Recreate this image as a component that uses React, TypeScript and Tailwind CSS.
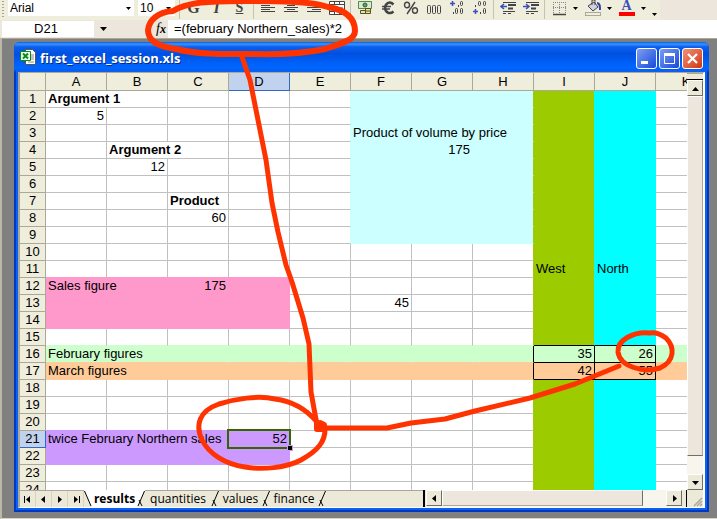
import { Fragment, type ReactNode } from "react";

const COLUMNS = ["A", "B", "C", "D", "E", "F", "G", "H", "I", "J", "K"];
const ROWS = Array.from({ length: 24 }, (_, i) => i + 1);

type Cell = { text: string; bold?: boolean; right?: boolean; span?: number };

const CELLS: Record<string, Cell> = {
  A1: { text: "Argument 1", bold: true, span: 2 },
  A2: { text: "5", right: true },
  B4: { text: "Argument 2", bold: true, span: 2 },
  B5: { text: "12", right: true },
  C7: { text: "Product", bold: true },
  C8: { text: "60", right: true },
  F3: { text: "Product of volume by price", span: 3 },
  G4: { text: "175", right: true },
  I11: { text: "West" },
  J11: { text: "North" },
  A12: { text: "Sales figure", span: 2 },
  C12: { text: "175", right: true },
  F13: { text: "45", right: true },
  A16: { text: "February figures", span: 3 },
  I16: { text: "35", right: true },
  J16: { text: "26", right: true },
  A17: { text: "March figures", span: 3 },
  I17: { text: "42", right: true },
  J17: { text: "55", right: true },
  A21: { text: "twice February Northern sales", span: 3 },
  D21: { text: "52", right: true },
};

type Fill = "none" | "pink" | "mint" | "peach" | "violet" | "ice" | "olive" | "cyan";

const BG: Record<Fill, string> = {
  none: "bg-white",
  pink: "bg-[#ff99cc]",
  mint: "bg-[#ccffcc]",
  peach: "bg-[#ffcc99]",
  violet: "bg-[#cc99ff]",
  ice: "bg-[#ccffff]",
  olive: "bg-[#9ccc00]",
  cyan: "bg-[#00ffff]",
};
const BORDER_R: Record<Fill, string> = {
  none: "border-r-[#c0c0c0]",
  pink: "border-r-[#ff99cc]",
  mint: "border-r-[#ccffcc]",
  peach: "border-r-[#ffcc99]",
  violet: "border-r-[#cc99ff]",
  ice: "border-r-[#ccffff]",
  olive: "border-r-[#9ccc00]",
  cyan: "border-r-[#00ffff]",
};
const BORDER_B: Record<Fill, string> = {
  none: "border-b-[#c0c0c0]",
  pink: "border-b-[#ff99cc]",
  mint: "border-b-[#ccffcc]",
  peach: "border-b-[#ffcc99]",
  violet: "border-b-[#cc99ff]",
  ice: "border-b-[#ccffff]",
  olive: "border-b-[#9ccc00]",
  cyan: "border-b-[#00ffff]",
};

function fillOf(c: number, r: number): Fill {
  if (r === 16) return "mint";
  if (r === 17) return "peach";
  if (c === 8) return "olive";
  if (c === 9) return "cyan";
  if (c >= 5 && c <= 7 && r <= 9) return "ice";
  if (c <= 3 && r >= 12 && r <= 14) return "pink";
  if (c <= 3 && (r === 21 || r === 22)) return "violet";
  return "none";
}

function edgeRight(c: number, r: number) {
  if ((r === 16 || r === 17) && c >= 7 && c <= 9) return "border-r-black";
  const next = fillOf(c + 1, r);
  return BORDER_R[next !== "none" ? next : fillOf(c, r)];
}

function edgeBottom(c: number, r: number) {
  if (r >= 15 && r <= 17 && (c === 8 || c === 9)) return "border-b-black";
  const below = fillOf(c, r + 1);
  return BORDER_B[below !== "none" ? below : fillOf(c, r)];
}

function SheetRow({ row }: { row: number }) {
  const cells: ReactNode[] = [];
  for (let c = 0; c < COLUMNS.length; ) {
    const cell = CELLS[COLUMNS[c] + row];
    const span = cell?.span ?? 1;
    cells.push(
      <td
        key={c}
        colSpan={span}
        className={`h-[17px] border-r border-b p-0 px-0.5 leading-4 whitespace-nowrap ${BG[fillOf(c, row)]} ${edgeRight(c + span - 1, row)} ${edgeBottom(c, row)} ${cell?.bold ? "font-bold" : ""} ${cell?.right ? "text-right" : "text-left"} ${row === 21 && c === 3 ? "relative" : ""}`}
      >
        {cell?.text}
        {row === 21 && c === 3 && (
          <span className="absolute -inset-0.5 border-2 border-[#336600]">
            <span className="absolute -right-1 -bottom-1 size-1.5 border border-[#cc99ff] bg-black" />
          </span>
        )}
      </td>,
    );
    c += span;
  }
  return (
    <tr>
      <th
        scope="row"
        className={`h-[17px] border-r border-b p-0 text-center leading-4 font-normal ${row === 21 ? "border-[#316ac5] bg-[#c1d2ee]" : "border-[#aca899] bg-[#efeddc]"}`}
      >
        {row}
      </th>
      {cells}
    </tr>
  );
}

function Sheet() {
  return (
    <table className="w-[697px] table-fixed border-separate border-spacing-0 text-[13px] text-black">
      <colgroup>
        <col className="w-[26px]" />
        {COLUMNS.map((c) => (
          <col key={c} className="w-[61px]" />
        ))}
      </colgroup>
      <thead>
        <tr>
          <td className="h-[18px] border-r border-b border-[#aca899] bg-[#efeddc] p-0" />
          {COLUMNS.map((c) => (
            <th
              key={c}
              scope="col"
              className={`h-[18px] border-r border-b p-0 leading-4 font-normal ${c === "D" ? "border-[#316ac5] bg-[#c1d2ee]" : "border-[#aca899] bg-[#efeddc]"}`}
            >
              {c}
            </th>
          ))}
        </tr>
      </thead>
      <tbody>
        {ROWS.map((r) => (
          <SheetRow key={r} row={r} />
        ))}
      </tbody>
    </table>
  );
}

type Direction = "up" | "down" | "left" | "right";
const TRIANGLES: Record<Direction, string> = {
  up: "M0 6 L3.5 2 L7 6Z",
  down: "M0 2 L7 2 L3.5 6Z",
  left: "M5 0 L1 3.5 L5 7Z",
  right: "M2 0 L6 3.5 L2 7Z",
};

function Triangle({ to }: { to: Direction }) {
  return (
    <svg viewBox="0 0 7 7" className="size-[7px]" aria-hidden="true">
      <path d={TRIANGLES[to]} />
    </svg>
  );
}

function ScrollButton({ to, label }: { to: Direction; label: string }) {
  return (
    <button
      aria-label={label}
      className="flex size-4 shrink-0 items-center justify-center border border-t-white border-r-[#716f64] border-b-[#716f64] border-l-white bg-[#ece9d8]"
    >
      <Triangle to={to} />
    </button>
  );
}

function ToolButton({ label, children }: { label: string; children: ReactNode }) {
  return (
    <button aria-label={label} className="flex h-4 w-[23px] shrink-0 items-center justify-center">
      {children}
    </button>
  );
}

function Drop({ label }: { label: string }) {
  return (
    <button aria-label={label} className="flex h-4 w-[11px] shrink-0 items-center justify-center">
      <svg viewBox="0 0 5 3" className="h-[3px] w-[5px]">
        <path d="M0 0h5L2.5 3z" />
      </svg>
    </button>
  );
}

function Separator() {
  return (
    <span className="flex h-[19px] w-[5px] shrink-0 justify-center">
      <span className="w-px bg-[#c5c2b2]" />
    </span>
  );
}

function Icon({ children }: { children: ReactNode }) {
  return (
    <svg viewBox="0 0 16 16" className="size-4" fill="none" stroke="#444" aria-hidden="true">
      {children}
    </svg>
  );
}

function Decimal({ more }: { more?: boolean }) {
  return (
    <Icon>
      <path d={more ? "M1 3.5h5M3.5 1v5" : "M1 11.5h5M3.5 9v5"} stroke="#3a4fb8" strokeWidth="1.5" />
      {more ? (
        <>
          <rect x="11.5" y="1.5" width="2" height="4" rx="1" />
          <path d="M9.5 5v2M4.5 12v2" />
          <rect x="6.5" y="8.5" width="2" height="5" rx="1" />
          <rect x="11.5" y="8.5" width="2" height="5" rx="1" />
        </>
      ) : (
        <>
          <rect x="6.5" y="1.5" width="2" height="4" rx="1" />
          <rect x="11.5" y="1.5" width="2" height="4" rx="1" />
          <path d="M3.5 5v2M8.5 12v2" />
          <rect x="11.5" y="8.5" width="2" height="5" rx="1" />
        </>
      )}
    </Icon>
  );
}

function Toolbar() {
  return (
    <div role="toolbar" aria-label="Formatting" className="flex h-5 items-start overflow-hidden bg-[#efeddc]">
      <span className="mt-px mr-1 ml-0.5 h-4 w-0.5 shrink-0 bg-[repeating-linear-gradient(#a8a593_0_1px,transparent_1px_3px)]" />
      <div className="flex h-4 w-[126px] shrink-0 bg-white">
        <select aria-label="Font" className="h-4 flex-1 appearance-none pl-0.5 text-xs leading-4 outline-none">
          <option>Arial</option>
        </select>
        <Drop label="Show fonts" />
      </div>
      <div className="ml-1 flex h-4 w-[37px] shrink-0 bg-white">
        <select aria-label="Font size" className="h-4 w-[25px] appearance-none pl-0.5 text-xs leading-4 outline-none">
          <option>10</option>
        </select>
        <Drop label="Show sizes" />
      </div>
      <span className="w-0.5 shrink-0" />
      <Separator />
      <ToolButton label="Bold">
        <span className="font-['Liberation_Serif',serif] text-base leading-4 font-black text-[#444]">G</span>
      </ToolButton>
      <ToolButton label="Italic">
        <span className="font-['Liberation_Serif',serif] text-base leading-4 font-bold text-[#444] italic">I</span>
      </ToolButton>
      <ToolButton label="Underline">
        <span className="font-['Liberation_Serif',serif] text-sm leading-4 font-bold text-[#444] underline">S</span>
      </ToolButton>
      <Separator />
      <ToolButton label="Align left">
        <Icon><path d="M1 3.5h14M1 5.5h9M1 7.5h14M1 9.5h9M1 11.5h14" /></Icon>
      </ToolButton>
      <ToolButton label="Center">
        <Icon><path d="M1 3.5h14M4 5.5h8M1 7.5h14M4 9.5h8M1 11.5h14" /></Icon>
      </ToolButton>
      <ToolButton label="Align right">
        <Icon><path d="M1 3.5h14M6 5.5h9M1 7.5h14M6 9.5h9M1 11.5h14" /></Icon>
      </ToolButton>
      <ToolButton label="Merge and center">
        <Icon>
          <path d="M.5 1.5h15v13h-15zM.5 4.5h15M.5 11.5h15M5.5 1v3M10.5 1v3M5.5 12v2M10.5 12v2" fill="#fff" />
          <path d="M2 8h3M11 8h3M6.5 10l1.5-4 1.5 4" />
        </Icon>
      </ToolButton>
      <Separator />
      <ToolButton label="Currency">
        <Icon>
          <path d="M1.5 1.5h13v7h-13z" fill="#d7ead2" stroke="#4f8a4f" />
          <circle cx="8" cy="5" r="2" fill="#6b9b63" stroke="#355e35" />
          <path d="M8.5 8.5h5v5h-5zM3.5 10.5h5v3h-5zM8.5 11h5" fill="#ebe58a" stroke="#55522c" />
        </Icon>
      </ToolButton>
      <ToolButton label="Euro">
        <Icon>
          <path d="M13.5 4.5C10 1 5.5 2.5 5 8c.5 5 5 6.5 8.5 3.5" strokeWidth="2.5" />
          <path d="M2 6.5h9M2 9h8" strokeWidth="1.5" />
        </Icon>
      </ToolButton>
      <ToolButton label="Percent">
        <Icon>
          <ellipse cx="4" cy="5" rx="2.5" ry="2.8" strokeWidth="1.4" />
          <ellipse cx="12" cy="10.5" rx="2.5" ry="2.8" strokeWidth="1.4" />
          <path d="M12 2L4 14" strokeWidth="1.4" />
        </Icon>
      </ToolButton>
      <ToolButton label="Thousands">
        <Icon>
          <rect x="1.5" y="5.5" width="3" height="8" rx="1" />
          <rect x="6.5" y="5.5" width="3" height="8" rx="1" />
          <rect x="11.5" y="5.5" width="3" height="8" rx="1" />
        </Icon>
      </ToolButton>
      <ToolButton label="Increase decimal"><Decimal more /></ToolButton>
      <ToolButton label="Decrease decimal"><Decimal /></ToolButton>
      <Separator />
      <ToolButton label="Decrease indent">
        <Icon>
          <path d="M3 2.5h13M3 11.5h12M3 13.5h3M8 13.5h3" />
          <path d="M8 5h8M8 8.5h5" strokeWidth="2" />
          <path d="M7 6.5H1M4 4L1 6.5 4 9" stroke="#3a4fb8" strokeWidth="1.5" />
        </Icon>
      </ToolButton>
      <ToolButton label="Increase indent">
        <Icon>
          <path d="M3 2.5h13M3 11.5h12M3 13.5h3M8 13.5h3" />
          <path d="M8 5h8M8 8.5h5" strokeWidth="2" />
          <path d="M0 6.5h6M3 4l3 2.5L3 9" stroke="#3a4fb8" strokeWidth="1.5" />
        </Icon>
      </ToolButton>
      <Separator />
      <ToolButton label="Borders">
        <Icon>
          <path d="M2 2.5h13M2 7.5h13M2.5 2v11M8.5 2v11M14.5 2v11" stroke="#888" strokeDasharray="1 1" />
          <path d="M2 14.5h13" strokeWidth="1.5" />
        </Icon>
      </ToolButton>
      <Drop label="Border styles" />
      <ToolButton label="Fill color">
        <Icon>
          <path d="M3 6l6-4 4 5-5 4z" fill="#cfd2e6" />
          <path d="M7 5V0h3v5" />
          <path d="M12 3c3 0 3 3 3 7" stroke="#2f45a8" strokeWidth="2" />
          <rect x=".5" y="12.5" width="15" height="3" fill="#efeddc" stroke="#aca899" />
        </Icon>
      </ToolButton>
      <Drop label="Fill colors" />
      <ToolButton label="Font color">
        <span className="flex h-4 w-4 flex-col items-center bg-[linear-gradient(transparent_12px,#ff0000_12px)] font-['Liberation_Serif',serif] text-sm leading-3 font-bold text-[#3a4fb8]">
          A
        </span>
      </ToolButton>
      <Drop label="Font colors" />
      <span className="mt-1.5 flex"><Drop label="Toolbar options" /></span>
      <span className="h-5 flex-1 bg-[#ece6dc]" />
    </div>
  );
}

function FormulaBar() {
  return (
    <div className="flex h-[18px] items-center bg-[#ece6dc] text-[13px]">
      <input
        aria-label="Name box"
        defaultValue="D21"
        className="ml-0.5 h-4 w-[92px] shrink-0 bg-white pr-1 text-center outline-none"
      />
      <button aria-label="Named ranges" className="flex w-[19px] shrink-0 justify-center">
        <svg viewBox="0 0 7 4" className="h-1 w-[7px]"><path d="M0 0h7L3.5 4z" /></svg>
      </button>
      <label
        htmlFor="formula"
        className="w-[55px] shrink-0 pr-0.5 text-right font-['Liberation_Serif',serif] text-sm leading-4 italic"
      >
        f<span className="text-xs font-bold">x</span>
      </label>
      <input
        id="formula"
        defaultValue="=(february Northern_sales)*2"
        className="h-[18px] min-w-0 flex-1 bg-white pl-1.5 outline-none"
      />
    </div>
  );
}

function TitleBar() {
  return (
    <header className="-mx-1 flex h-[30px] shrink-0 items-center rounded-t-md bg-[linear-gradient(#0a5be0_0,#3a94ff_2px,#0a5ff0_5px,#0050e0_12px,#0062fa_22px,#0066ff_27px,#003fc0_30px)] px-1.5">
      <svg viewBox="0 0 16 16" className="size-4" aria-hidden="true">
        <path d="M5.5.5h7l3 3v12h-10z" fill="#fff" stroke="#555" />
        <path d="M11 6h3M11 8h3M11 10h3M8 13h6" stroke="#888" />
        <path d="M.5 2.5h10v9H.5z" fill="#e8ffe8" stroke="#0a8a18" />
        <path d="M3 4.500l5 5M8 4.500l-5 5" stroke="#0a8a18" strokeWidth="2" />
      </svg>
      <h1 className="flex-1 pt-0.5 pl-1 font-['Open_Sans',sans-serif] text-[13px] leading-4 font-bold text-white [text-shadow:1px_1px_#0a2a80]">
        first_excel_session.xls
      </h1>
      <div className="mt-0.5 flex gap-0.5">
        <button aria-label="Minimize" className="size-[21px] rounded-[3px] border border-white bg-linear-to-br from-[#7d9df5] to-[#1944d8]">
          <svg viewBox="0 0 19 19"><path d="M4 13.5h7" stroke="#fff" strokeWidth="3" /></svg>
        </button>
        <button aria-label="Maximize" className="size-[21px] rounded-[3px] border border-white bg-linear-to-br from-[#7d9df5] to-[#1944d8]">
          <svg viewBox="0 0 19 19"><path d="M4.5 5v9.5h10V5" fill="none" stroke="#fff" /><path d="M4 5.5h11" stroke="#fff" strokeWidth="3" /></svg>
        </button>
        <button aria-label="Close" className="size-[21px] rounded-[3px] border border-white bg-linear-to-br from-[#f09070] to-[#d03008]">
          <svg viewBox="0 0 19 19"><path d="M5 5l9 9M14 5l-9 9" stroke="#fff" strokeWidth="2.3" /></svg>
        </button>
      </div>
    </header>
  );
}

function Slant({ back }: { back?: boolean }) {
  return (
    <svg viewBox="0 0 8 17" className="h-[17px] w-2 shrink-0" aria-hidden="true">
      {back ? (
        <>
          <path d="M0 0h8v17z" fill="#fff" />
          <path d="M.5 1L7 16" stroke="#000" />
        </>
      ) : (
        <path d="M7.5 1L1 16M2 10l3 6" fill="none" stroke="#000" />
      )}
    </svg>
  );
}

const TABS = [
  { name: "quantities", width: "w-[66px]" },
  { name: "values", width: "w-[43px]" },
  { name: "finance", width: "w-[48px]" },
];

function BottomBar() {
  return (
    <div className="flex h-[17px] shrink-0 bg-[#ece9d8]">
      <nav aria-label="Sheets" className="flex flex-1 border-t border-[#aca899]">
        <button aria-label="First sheet" className="flex w-4 items-center justify-center border-r border-[#d8d4c4]">
          <span className="h-[7px] w-px bg-black" /><Triangle to="left" />
        </button>
        <button aria-label="Previous sheet" className="flex w-4 items-center justify-center border-r border-[#d8d4c4]"><Triangle to="left" /></button>
        <button aria-label="Next sheet" className="flex w-4 items-center justify-center border-r border-[#d8d4c4]"><Triangle to="right" /></button>
        <button aria-label="Last sheet" className="flex w-4 items-center justify-center border-r border-[#d8d4c4]">
          <Triangle to="right" /><span className="h-[7px] w-px bg-black" />
        </button>
        <div className="-mt-px flex font-['Open_Sans',sans-serif] text-xs leading-4">
          <Slant back />
          <button className="w-[45px] bg-white text-center font-bold">results</button>
          <span className="flex bg-[linear-gradient(115deg,#fff_50%,transparent_50%)]"><Slant /></span>
          {TABS.map((t) => (
            <Fragment key={t.name}>
              <button className={`${t.width} text-center`}>{t.name}</button>
              <Slant />
            </Fragment>
          ))}
        </div>
      </nav>
      <div className="mr-px w-0.5 bg-black" />
      <div className="flex w-[256px] shrink-0 bg-[#f7f5ec]">
        <ScrollButton to="left" label="Scroll left" />
        <div className="h-4 w-[201px] border border-t-white border-r-[#716f64] border-b-[#aca899] border-l-white bg-[#ece6dc]" />
        <div className="flex-1" />
        <ScrollButton to="right" label="Scroll right" />
      </div>
      <div className="w-[5px] border-r border-black bg-[#ece9d8]" />
      <svg viewBox="0 0 16 17" className="h-[17px] w-4" aria-hidden="true">
        <path d="M7 16l8-8M10 16l5-5M13 16l2-2" stroke="#aca899" strokeWidth="1.5" />
      </svg>
    </div>
  );
}

function VerticalScroll() {
  return (
    <div className="flex w-4 shrink-0 flex-col bg-[#f7f5ec]">
      <div className="h-[7px] shrink-0 border-t border-b border-t-[#aca899] border-b-black bg-[#ece9d8]" />
      <ScrollButton to="up" label="Scroll up" />
      <div className="min-h-0 flex-1 border border-t-white border-r-[#aca899] border-b-[#716f64] border-l-white bg-[#ece6dc]" />
      <div className="h-[18px] shrink-0" />
      <ScrollButton to="down" label="Scroll down" />
    </div>
  );
}

function Annotations() {
  return (
    <svg
      viewBox="0 0 717 519"
      className="pointer-events-none absolute top-0 left-0 h-[519px] w-[717px]"
      fill="none"
      stroke="#ff3300"
      strokeWidth="5"
      strokeLinecap="round"
      strokeLinejoin="round"
      aria-hidden="true"
    >
      <path
        d="M173 11C158 12 149 20 148 30C148 42 160 47 176 49C200 55 225 54 250 54C285 55 307 53 325 49C344 43 355 39 355 31C355 17 345 10 328 7C310 1 278 1 240 1C210 1 188 2 173 11Z"
        strokeWidth="6"
      />
      <path d="M242 57L250 80L258 120L266 160L272 203L278 232L286 265L292 282L303 318L309 344L311 392L317 425" />
      <path d="M317 424l3-1 4 2v4h-7z" strokeWidth="6" fill="#ff3300" />
      <path d="M324 428H387L411 423L445 419L475 411L530 398L575 384L619 366" />
      <path d="M317 422C306 409 291 401 275 399C258 395 235 399 219 404C199 411 195 425 202 440C209 454 225 464 245 467C262 470 286 468 301 460C317 451 326 442 325 427" />
      <path d="M650 333C634 331 617 340 618 352C620 367 644 373 660 368C675 361 675 347 666 338C662 335 656 332 650 333Z" />
    </svg>
  );
}

export default function App() {
  return (
    <div className="relative flex h-screen flex-col overflow-hidden bg-[#808080] font-['Liberation_Sans',Arial,sans-serif] text-black">
      <Toolbar />
      <FormulaBar />
      <main className="flex min-h-0 flex-1 flex-col border-t border-b border-l-2 border-t-[#aca899] border-b-[#d8d4c8] border-l-[#bbb8a8] px-2 pt-[3px] pr-2 pb-1.5 pl-3">
        <section className="flex min-h-0 flex-1 flex-col rounded-t-md border-x-4 border-b-4 border-[#0038c0] bg-white">
          <TitleBar />
          <div className="flex min-h-0 flex-1 flex-col border-t border-r-2 border-b border-l-2 border-t-[#aca899] border-r-white border-b-white border-l-[#aca899] shadow-[0_0_0_2px_#0a60f0]">
            <div className="flex min-h-0 flex-1">
              <div className="min-w-0 flex-1 overflow-hidden">
                <Sheet />
              </div>
              <VerticalScroll />
            </div>
            <BottomBar />
          </div>
        </section>
      </main>
      <Annotations />
    </div>
  );
}
